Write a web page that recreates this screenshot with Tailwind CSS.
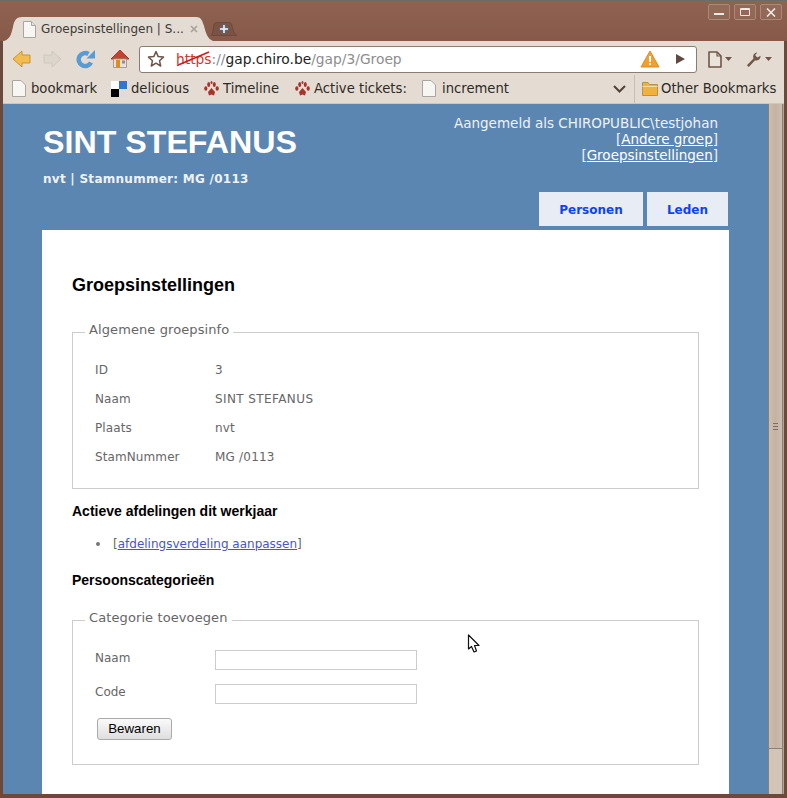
<!DOCTYPE html>
<html lang="nl">
<head>
  <meta charset="UTF-8" />
  <title>Groepsinstellingen</title>
  <script src="https://cdn.jsdelivr.net/npm/@tailwindcss/browser@4"></script>
</head>
<body class="w-[787px] h-[798px] overflow-hidden bg-[#5f4337] font-['DejaVu_Sans',sans-serif]">
<div class="w-[787px] h-[798px] flex flex-col pl-[3px] pr-[3px] pb-[4px] bg-[#6b4a3c]">

  <!-- Title bar with tabs -->
  <div class="relative h-[41px] -mx-[3px] px-[3px] flex items-end bg-gradient-to-b from-[#8f6350] to-[#86594a] border-t border-[#6f6a66]">
    <div class="relative w-[209px] h-[24px] ml-[1px] flex items-center pl-[18px] pr-[14px] gap-[4px] text-[12px] text-[#3c3b37]">
      <svg class="absolute left-0 top-0" width="209" height="24" viewBox="0 0 209 24"><path d="M0 24C6 22 7 18 9 10C10 4 12 0 18 0H192C197 0 198 3 200 9C202 17 204 22 209 24Z" fill="#e4dcd2"/></svg>
      <svg class="relative shrink-0" width="15" height="17" viewBox="0 0 15 17"><path d="M1.500.5H9.500L13.500 4.500V16.500H1.500Z" fill="#f7f6f3" stroke="#a9a6a2"/><path d="M9.500.5V4.500H13.500" fill="#e2e0dc" stroke="#a9a6a2"/></svg>
      <span class="relative whitespace-nowrap">Groepsinstellingen | S...</span>
      <svg class="relative ml-auto mr-[1px]" width="8" height="8" viewBox="0 0 8 8"><path d="M1 1L7 7M7 1L1 7" stroke="#a8a29b" stroke-width="1.700"/></svg>
    </div>
    <div class="relative w-[26px] h-[14px] mb-[5px] -ml-[2px] flex items-center justify-center">
      <svg class="absolute left-0 top-0" width="26" height="14" viewBox="0 0 26 14"><path d="M0 13.500H26C23 12 22 9 21 4C20.500 1.500 20 .5 17 .5H6C3 .5 3 2 2.500 5C2 9 2 12 0 13.500Z" fill="#7b5344" stroke="#6d4a3d"/></svg>
      <svg class="relative" width="10" height="10" viewBox="0 0 10 10"><path d="M3.700.5H6.300V3.700H9.500V6.300H6.300V9.500H3.700V6.300H.5V3.700H3.700Z" fill="#e6ebf2" stroke="#4f5566" stroke-width=".8"/></svg>
    </div>
    <div class="absolute right-[5px] top-[3px] flex gap-[4px]">
      <div class="w-[22px] h-[16px] rounded-[2px] border border-[#ab8877] flex items-center justify-center bg-white/5"><div class="w-[10px] h-[2px] mt-[3px] bg-[#efe9e4]"></div></div>
      <div class="w-[22px] h-[16px] rounded-[2px] border border-[#ab8877] flex items-center justify-center bg-white/5"><div class="w-[10px] h-[8px] border border-t-2 border-[#efe9e4] rounded-[1px]"></div></div>
      <div class="w-[22px] h-[16px] rounded-[2px] border border-[#ab8877] flex items-center justify-center bg-white/5"><svg width="10" height="9" viewBox="0 0 10 9"><path d="M1 .5L9 8.500M9 .5L1 8.500" stroke="#efe9e4" stroke-width="1.600"/></svg></div>
    </div>
  </div>

  <!-- Toolbar -->
  <div class="h-[32px] pt-[4px] flex items-center bg-[#e4dcd2]">
    <svg class="ml-[9px]" width="20" height="18" viewBox="0 0 20 18"><path d="M1 9L10 1V5H18V13H10V17Z" fill="#f2bd4e" stroke="#c8942e" stroke-linejoin="round"/></svg>
    <svg class="ml-[10px]" width="20" height="18" viewBox="0 0 20 18"><path d="M19 9L10 1V5H2V13H10V17Z" fill="#dbd5cb" stroke="#cfc8bd" stroke-linejoin="round"/></svg>
    <svg class="ml-[14px]" width="20" height="20" viewBox="0 0 20 20"><path d="M15 13.500A6.500 6.500 0 1 1 12.500 5" fill="none" stroke="#5b9bd5" stroke-width="4.500"/><path d="M19 1V9.500H10.500Z" fill="#5b9bd5"/></svg>
    <svg class="ml-[14px]" width="20" height="20" viewBox="0 0 20 20"><path d="M10 1L19 10H1Z" fill="#c8402f" stroke="#ab3a2c" stroke-linejoin="round"/><path d="M3.500 10H16.500V18.500H3.500Z" fill="#e6e2da" stroke="#a79f93"/><rect x="6" y="11" width="4" height="7.500" fill="#d9901f"/><rect x="12" y="11.500" width="3" height="3" fill="#8a9099"/></svg>
    <div class="ml-[9px] w-[558px] h-[27px] rounded-[3px] border border-[#8c7d72] bg-white flex items-center pl-[7px] pr-[10px] text-[13.800px]">
      <svg width="18" height="18" viewBox="0 0 18 18"><path d="M9 1.500L11.200 6.600L16.500 7.100L12.500 10.700L13.700 16L9 13.200L4.300 16L5.500 10.700L1.500 7.100L6.800 6.600Z" fill="#fff" stroke="#6f5548" stroke-width="1.500" stroke-linejoin="round"/></svg>
      <div class="relative ml-[11px] whitespace-nowrap">
        <span class="text-[#d4352d]">https</span><span class="text-[#7f8c99]">://</span><span class="text-[#222]">gap.chiro.be</span><span class="text-[#8d8d8d]">/gap/3/Groep</span>
        <svg class="absolute left-0 top-[1px]" width="34" height="18" viewBox="0 0 34 18"><path d="M1 15.500L33 2" stroke="#cf1f1f" stroke-width="1.800"/></svg>
      </div>
      <svg class="ml-auto" width="20" height="18" viewBox="0 0 20 18"><path d="M10 1L19 17H1Z" fill="#f0a030" stroke="#e08a1f" stroke-linejoin="round"/><rect x="9" y="6" width="2" height="6" fill="#fff"/><rect x="9" y="13" width="2" height="2" fill="#fff"/></svg>
      <svg class="ml-[15px]" width="11" height="12" viewBox="0 0 11 12"><path d="M1 1L10 6L1 11Z" fill="#5f4a40"/></svg>
    </div>
    <svg class="ml-[11px]" width="14" height="17" viewBox="0 0 14 17"><path d="M1 1H9L13 5V16H1Z" fill="#e9e3da" stroke="#6f5548" stroke-width="1.600" stroke-linejoin="round"/><path d="M9 1V5H13" fill="none" stroke="#6f5548" stroke-width="1.200"/></svg>
    <svg class="ml-[3px]" width="7" height="4" viewBox="0 0 7 4"><path d="M0 0H7L3.500 4Z" fill="#6f5548"/></svg>
    <svg class="ml-[13px]" width="17" height="17" viewBox="0 0 18 18"><path d="M2 15L9 8C8 5 9 2 13 1.500L10.800 4.500L13 7L16.500 5C16.500 9 13 10.800 10.500 10L4 17Z" fill="#72584a"/></svg>
    <svg class="ml-[3px]" width="7" height="4" viewBox="0 0 7 4"><path d="M0 0H7L3.500 4Z" fill="#6f5548"/></svg>
  </div>

  <!-- Bookmarks bar -->
  <div class="h-[31px] pt-[1px] flex items-center bg-[#e4dcd2] text-[13.200px] text-[#2e2a26] whitespace-nowrap border-b border-[#cfc6ba]">
    <svg class="ml-[9px] shrink-0" width="14" height="17" viewBox="0 0 14 17"><path d="M.5.5H9L13.500 5V16.500H.5Z" fill="#f7f6f3" stroke="#a9a6a2"/></svg>
    <span class="ml-[5px] w-[66px]">bookmark</span>
    <svg class="ml-[14px] shrink-0" width="16" height="16" viewBox="0 0 16 16"><rect width="8" height="8" fill="#fff"/><rect x="8" width="8" height="8" fill="#3274d0"/><rect y="8" width="8" height="8" fill="#000"/><rect x="8" y="8" width="8" height="8" fill="#dcdcdc"/></svg>
    <span class="ml-[4px] w-[58px]">delicious</span>
    <svg class="ml-[15px] shrink-0" width="15" height="16" viewBox="0 0 15 16"><g fill="#a8322c"><path d="M7.500 7L11 11L10 14.500L7.500 13.500L5 14.500L4 11Z"/><ellipse cx="1.800" cy="7.500" rx="1.600" ry="2.300"/><ellipse cx="13.200" cy="7.500" rx="1.600" ry="2.300"/><ellipse cx="4.700" cy="3.500" rx="1.500" ry="2.500"/><ellipse cx="10.300" cy="3.500" rx="1.500" ry="2.500"/><ellipse cx="7.500" cy="1.500" rx="1" ry="1.500"/></g></svg>
    <span class="ml-[4px] w-[57px]">Timeline</span>
    <svg class="ml-[15px] shrink-0" width="15" height="16" viewBox="0 0 15 16"><g fill="#a8322c"><path d="M7.500 7L11 11L10 14.500L7.500 13.500L5 14.500L4 11Z"/><ellipse cx="1.800" cy="7.500" rx="1.600" ry="2.300"/><ellipse cx="13.200" cy="7.500" rx="1.600" ry="2.300"/><ellipse cx="4.700" cy="3.500" rx="1.500" ry="2.500"/><ellipse cx="10.300" cy="3.500" rx="1.500" ry="2.500"/><ellipse cx="7.500" cy="1.500" rx="1" ry="1.500"/></g></svg>
    <span class="ml-[4px] w-[93px]">Active tickets:</span>
    <svg class="ml-[15px] shrink-0" width="14" height="17" viewBox="0 0 14 17"><path d="M.5.5H9L13.500 5V16.500H.5Z" fill="#f7f6f3" stroke="#a9a6a2"/></svg>
    <span class="ml-[6px] w-[65px]">increment</span>
    <svg class="ml-[106px] shrink-0" width="13" height="8" viewBox="0 0 13 8"><path d="M1 1L6.500 6.500L12 1" fill="none" stroke="#4f4238" stroke-width="2"/></svg>
    <div class="ml-[8px] w-px h-[28px] bg-[#c8bfb3]"></div>
    <svg class="ml-[7px] shrink-0" width="16" height="15" viewBox="0 0 16 15"><path d="M.5 1.500H6L7.500 3.500H15.500V14.500H.5Z" fill="#f0b23c" stroke="#b9914f"/><path d="M.5 5.500H15.500" stroke="#f8dc97"/></svg>
    <span class="ml-[3px]">Other Bookmarks</span>
  </div>

  <!-- Page + scrollbar -->
  <div class="flex-1 min-h-0 flex">
    <div class="relative flex-1 min-w-0 flex flex-col bg-[#5c86b2]">
      <header class="relative h-[126px] shrink-0 flex justify-between pl-[40px] pr-[50px]">
        <div>
          <h1 class="mt-[19px] text-[32.200px] leading-[38px] font-bold text-white font-['Liberation_Sans',sans-serif]">SINT STEFANUS</h1>
          <p class="mt-[11px] text-[12px] leading-[14px] font-bold tracking-[0.27px] text-[#eef2f7]">nvt | Stamnummer: MG /0113</p>
        </div>
        <div class="pt-[11px] text-right text-[13.500px] leading-[16px] text-[#eef2f7]">
          <p>Aangemeld als CHIROPUBLIC\testjohan</p>
          <p>[<a class="underline text-white" href="#">Andere groep</a>]</p>
          <p>[<a class="underline text-white" href="#">Groepsinstellingen</a>]</p>
        </div>
        <nav class="absolute right-[40px] top-[88px] flex gap-[4px] text-[12px] font-bold text-[#0a45f5]">
          <a class="w-[104px] h-[34px] pt-[1px] flex items-center justify-center bg-[#e8ecf4]" href="#">Personen</a>
          <a class="w-[81px] h-[34px] pt-[1px] flex items-center justify-center bg-[#e8ecf4]" href="#">Leden</a>
        </nav>
      </header>

      <main class="flex-1 ml-[39px] mr-[39px] bg-white px-[30px] text-[12px] text-[#666]">
        <h2 class="mt-[44px] text-[18px] leading-[22px] font-bold text-black font-['Liberation_Sans',sans-serif]">Groepsinstellingen</h2>

        <fieldset class="mt-[27px] h-[166px] border border-[#ccc] px-[22px]">
          <legend class="ml-[-10px] px-[4px] pb-[4px] text-[13px] tracking-[0.1px] leading-[14px]">Algemene groepsinfo</legend>
          <dl class="mt-[14px] grid grid-cols-[120px_1fr] auto-rows-[29px] items-center tracking-[0.1px]">
            <dt>ID</dt><dd>3</dd>
            <dt>Naam</dt><dd class="tracking-[0.4px]">SINT STEFANUS</dd>
            <dt>Plaats</dt><dd>nvt</dd>
            <dt>StamNummer</dt><dd class="tracking-[0.2px]">MG /0113</dd>
          </dl>
        </fieldset>

        <h3 class="mt-[14px] text-[14px] leading-[16px] font-bold text-black font-['Liberation_Sans',sans-serif]">Actieve afdelingen dit werkjaar</h3>
        <ul class="mt-[18px] leading-[14px]">
          <li class="flex items-center pl-[24px]"><span class="w-[4px] h-[4px] mr-[13px] rounded-full bg-[#777]"></span><span>[<a class="underline text-[#4a55c4]" href="#">afdelingsverdeling aanpassen</a>]</span></li>
        </ul>
        <h3 class="mt-[21px] text-[14px] leading-[16px] font-bold text-black font-['Liberation_Sans',sans-serif]">Persoonscategorieën</h3>

        <fieldset class="mt-[23px] h-[154px] border border-[#ccc] px-[22px]">
          <legend class="ml-[-10px] px-[4px] pb-[4px] text-[13px] tracking-[0.1px] leading-[14px]">Categorie toevoegen</legend>
          <div class="mt-[21px] flex flex-col gap-[14px]">
            <div class="flex items-start"><label class="w-[120px] -mt-[1px]">Naam</label><input class="w-[202px] h-[20px] border border-[#ccc] bg-white" type="text" /></div>
            <div class="flex items-start"><label class="w-[120px] -mt-[1px]">Code</label><input class="w-[202px] h-[20px] border border-[#ccc] bg-white" type="text" /></div>
          </div>
          <button class="mt-[14px] ml-[2px] w-[75px] h-[22px] rounded-[3px] border border-[#aaa] bg-gradient-to-b from-[#fafafa] to-[#dedede] text-[13.300px] text-black font-['Liberation_Sans',sans-serif]">Bewaren</button>
        </fieldset>
      </main>

      <svg class="absolute left-[464px] top-[530px]" width="14" height="20" viewBox="0 0 14 20"><path d="M1.500 1V15L4.500 12.500L7 18L9.500 17L7.500 11.500H12Z" fill="#fff" stroke="#111" stroke-width="1.200" stroke-linejoin="round"/></svg>
    </div>

    <!-- Scrollbar -->
    <div class="w-[16px] shrink-0 pr-[1px] bg-[#b3a598]">
      <div class="h-full flex flex-col border-x border-[#8b8078] bg-gradient-to-r from-[#cdbdae] via-[#c4b3a3] to-[#cdbdae]">
        <div class="flex-1 flex items-center justify-center">
          <div class="w-[5px] h-[7px] border-y border-[#7d6e65] flex items-center"><div class="w-full h-px bg-[#7d6e65]"></div></div>
        </div>
        <div class="h-[46px] border-t border-[#8b8078] bg-[#d2c4b6]"></div>
      </div>
    </div>
  </div>
</div>
</body>
</html>
